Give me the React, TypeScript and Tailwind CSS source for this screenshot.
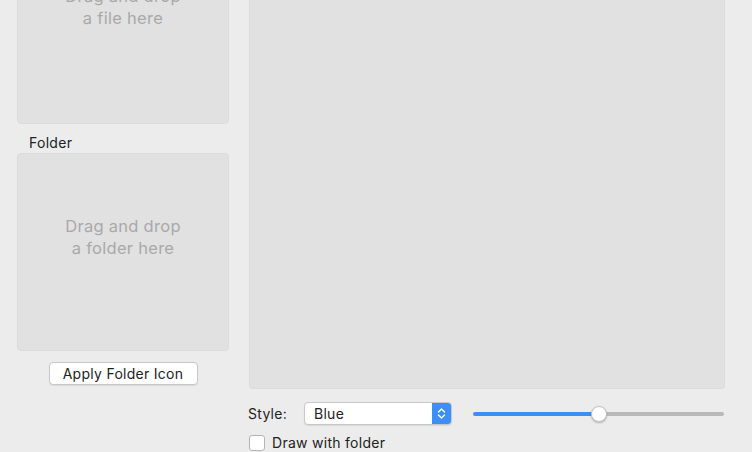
import React from "react";

const font = { fontFamily: "Inter, 'Liberation Sans', sans-serif" };

const DropBox = ({ text, extra }: { text: string[]; extra: string }) => (
  <div
    className={`flex flex-col items-center justify-center rounded-[4px] border border-[#dcdcdc] bg-[#e1e1e1] text-[16.5px] leading-[22px] text-[#a9a9a9] ${extra}`}
  >
    {text.map((t) => (
      <span key={t}>{t}</span>
    ))}
  </div>
);

const App = () => {
  return (
    <div
      className="flex h-[452px] w-[752px] overflow-hidden bg-[#ececec] text-[14px] tracking-[0.02em] text-[#222]"
      style={font}
    >
      {/* Left column */}
      <div className="ml-[17px] -mt-[80px] flex w-[212px] flex-col">
        <DropBox text={["Drag and drop", "a file here"]} extra="h-[204px] pb-[30px]" />
        <div className="h-[29px] pl-[12px] pt-[11px] leading-[16px]">Folder</div>
        <DropBox text={["Drag and drop", "a folder here"]} extra="h-[198px] pb-[30px]" />
        <div className="mt-[11px] flex justify-center">
          <button className="h-[23px] w-[149px] rounded-[4px] border border-[#c8c8c8] bg-white text-[14px] leading-[21px] tracking-[0.02em] text-[#222] shadow-[0_1px_1px_rgba(0,0,0,0.08)]">
            Apply Folder Icon
          </button>
        </div>
      </div>

      {/* Right column */}
      <div className="ml-[20px] flex w-[476px] flex-col">
        <div className="h-[389px] rounded-b-[4px] border border-t-0 border-[#dcdcdc] bg-[#e1e1e1]" />

        <div className="mt-[13px] flex h-[23px] items-center">
          <span className="-ml-[1px] w-[56px]">Style:</span>
          <div className="flex h-[23px] w-[148px] overflow-hidden rounded-[4px] border border-[#c8c8c8] bg-white shadow-[0_1px_1px_rgba(0,0,0,0.08)]">
            <span className="flex-1 pl-[9px] leading-[21px]">Blue</span>
            <div className="flex w-[19px] items-center justify-center bg-[#3d8ef7]">
              <svg width="9" height="13" viewBox="0 0 9 13" fill="none">
                <path d="M1.5 5 L4.5 2 L7.5 5" stroke="white" strokeWidth="1.4" strokeLinecap="round" strokeLinejoin="round" />
                <path d="M1.5 8 L4.5 11 L7.5 8" stroke="white" strokeWidth="1.4" strokeLinecap="round" strokeLinejoin="round" />
              </svg>
            </div>
          </div>

          <div className="relative ml-[21px] flex h-[16px] w-[251px] items-center">
            <div className="h-[4px] w-[125px] rounded-l-full bg-[#3d8ef7]" />
            <div className="h-[4px] flex-1 rounded-r-full bg-[#b9b9b9]" />
            <div className="absolute left-[118px] top-0 h-[16px] w-[16px] rounded-full border border-[#c4c4c4] bg-white shadow-[0_1px_2px_rgba(0,0,0,0.25)]" />
          </div>
        </div>

        <div className="mt-[10px] flex items-center">
          <div className="h-[16px] w-[16px] rounded-[3px] border border-[#b5b5b5] bg-white" />
          <span className="ml-[7px] leading-[16px]">Draw with folder</span>
        </div>
      </div>
    </div>
  );
};

export default App;
